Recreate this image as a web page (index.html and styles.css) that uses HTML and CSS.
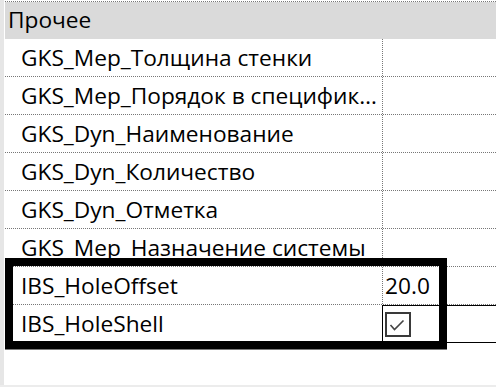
FILE: index.html
```html
<!DOCTYPE html>
<html>
<head>
<meta charset="utf-8">
<link rel="stylesheet" href="styles.css">
</head>
<body>
<div class="frame">
  <div class="strip"></div>
  <div class="grid">
    <div class="top-line"></div>
    <div class="header">Прочее</div>
    <div class="row"><div class="name">GKS_Мер_Толщина стенки</div><div class="value"></div></div>
    <div class="row"><div class="name">GKS_Мер_Порядок в спецификации</div><div class="value"></div></div>
    <div class="row"><div class="name">GKS_Dyn_Наименование</div><div class="value"></div></div>
    <div class="row"><div class="name">GKS_Dyn_Количество</div><div class="value"></div></div>
    <div class="row"><div class="name">GKS_Dyn_Отметка</div><div class="value"></div></div>
    <div class="row"><div class="name">GKS_Мер_Назначение системы</div><div class="value"></div></div>
    <div class="row"><div class="name">IBS_HoleOffset</div><div class="value">20.0</div></div>
    <div class="row row-focus"><div class="name">IBS_HoleShell</div><div class="value value-focus">
      <svg class="check" width="26" height="25" viewBox="0 0 26 25">
        <rect x="1" y="1" width="24" height="23" fill="#fff" stroke="#3a3a3a" stroke-width="2"/>
        <path d="M5.5 13 L9.5 17.5 L18.5 8.5" fill="none" stroke="#444" stroke-width="1.6"/>
      </svg>
    </div></div>
    <div class="highlight"></div>
  </div>
</div>
<div class="bottom-band"></div>
</body>
</html>
```
FILE: styles.css
```css
html, body {
  margin: 0;
  padding: 0;
  background: #fff;
}
body {
  width: 496px;
  height: 387px;
  overflow: hidden;
  font-family: "Open Sans", "Noto Sans", sans-serif;
  font-size: 22.7px;
  color: #000;
  position: relative;
}
.frame {
  display: flex;
  height: 385px;
}
.strip {
  width: 4px;
  background: #e6e6e6;
  flex: none;
}
.grid {
  flex: 1;
  padding-left: 1px;
  position: relative;
}
.top-line {
  margin-top: 1px;
  border-top: 1px dotted #777;
  height: 0;
}
.header {
  height: 37px;
  background: #dadada;
  display: flex;
  align-items: center;
  padding-left: 3px;
  line-height: 1;
}
.row {
  display: flex;
  height: 37px;
  border-bottom: 1px dotted #777;
}
.name {
  width: 361px;
  padding-left: 16px;
  white-space: nowrap;
  overflow: hidden;
  text-overflow: ellipsis;
  line-height: 37px;
  flex: none;
}
.value {
  flex: 1;
  border-left: 1px dotted #777;
  padding-left: 2px;
  line-height: 37px;
}
.row-focus {
  border-bottom: none;
  height: 38px;
}
.value-focus {
  border: 1px solid #000;
  border-right: none;
  display: flex;
  align-items: center;
}
.check {
  display: block;
}
.highlight {
  position: absolute;
  left: 1px;
  top: 258px;
  width: 426px;
  height: 75px;
  border: 8px solid #000;
  box-shadow: 0 1px 0 #7a7a7a;
}
.bottom-band {
  height: 2px;
  background: #ececec;
}
```
